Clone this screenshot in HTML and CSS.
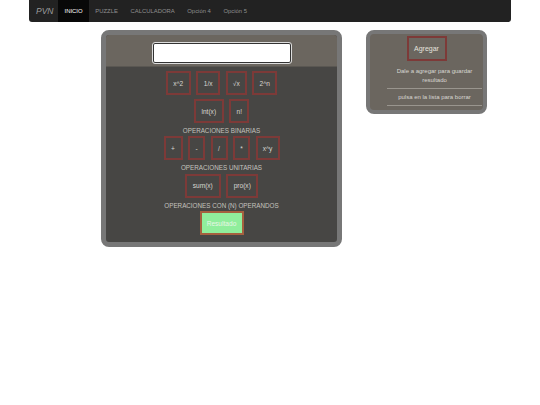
FILE: index.html
```html
<!DOCTYPE html>
<html lang="en">
<head>
  <meta charset="UTF-8">
  <title>PVN</title>
  <link rel="stylesheet" href="styles.css">
</head>
<body>

<nav class="navbar">
  <a class="brand">PVN</a>
  <a class="nav-item active">INICIO</a>
  <a class="nav-item">PUZZLE</a>
  <a class="nav-item">CALCULADORA</a>
  <a class="nav-item">Opción 4</a>
  <a class="nav-item">Opción 5</a>
</nav>

<div class="content">
  <div class="calculator">
    <div class="screen">
      <input type="text" class="display">
    </div>
    <div class="keys">
      <div class="row">
        <button class="key w25">x^2</button>
        <button class="key w24">1/x</button>
        <button class="key w21">√x</button>
        <button class="key w25">2^n</button>
      </div>
      <div class="row">
        <button class="key w30">lnt(x)</button>
        <button class="key w20">n!</button>
      </div>
      <div class="label">OPERACIONES BINARIAS</div>
      <div class="row">
        <button class="key w19">+</button>
        <button class="key w17">-</button>
        <button class="key w17">/</button>
        <button class="key w17">*</button>
        <button class="key w24">x^y</button>
      </div>
      <div class="label">OPERACIONES UNITARIAS</div>
      <div class="row">
        <button class="key w36">sum(x)</button>
        <button class="key w32">pro(x)</button>
      </div>
      <div class="label">OPERACIONES CON (N) OPERANDOS</div>
      <div class="row">
        <button class="key result">Resultado</button>
      </div>
    </div>
  </div>

  <div class="side">
    <button class="key add">Agregar</button>
    <p class="hint">Dale a agregar para guardar resultado</p>
    <p class="hint ruled">pulsa en la lista para borrar</p>
  </div>
</div>

</body>
</html>
```

FILE: styles.css
```css
* {
  box-sizing: border-box;
}

body {
  margin: 0;
  background: white;
  font-family: "Liberation Sans", Arial, sans-serif;
  color: #d8d6d2;
}

.navbar {
  display: flex;
  align-items: stretch;
  width: 482px;
  height: 22px;
  margin-left: 29px;
  padding-left: 7px;
  background: #222;
  border-radius: 0 0 3px 3px;
}

.brand {
  display: flex;
  align-items: center;
  width: 22px;
  font-size: 8.5px;
  font-style: italic;
  color: #9d9d9d;
}

.nav-item {
  display: flex;
  align-items: center;
  padding: 0 6.3px;
  font-size: 5.9px;
  color: #8f8f8f;
}

.nav-item.active {
  justify-content: center;
  width: 31px;
  padding: 0;
  background: #080808;
  color: white;
}

.content {
  display: flex;
  align-items: flex-start;
  margin: 8px 0 0 101px;
  gap: 24px;
}

.calculator {
  width: 241px;
  height: 217px;
  border: 5px solid #777;
  border-radius: 8px;
  overflow: hidden;
  background: #474644;
}

.screen {
  display: flex;
  justify-content: center;
  align-items: center;
  height: 32px;
  padding-top: 4px;
  background: #6b665f;
  border-bottom: 1px solid #5a5752;
}

.display {
  width: 138px;
  height: 20px;
  background: white;
  border: 1px solid #333;
  outline: 1px solid #ddd;
  border-radius: 2px;
}

.keys {
  padding-top: 4px;
}

.row {
  display: flex;
  justify-content: center;
  gap: 5.5px;
  margin-bottom: 4px;
}

.key {
  height: 24px;
  padding: 0;
  background: transparent;
  border: 2px solid #7d3a38;
  font-family: inherit;
  font-size: 6.6px;
  color: #d8d6d2;
}

.w17 { width: 17px; }
.w19 { width: 19px; }
.w20 { width: 20px; }
.w21 { width: 21px; }
.w24 { width: 24px; }
.w25 { width: 25px; }
.w30 { width: 30px; }
.w32 { width: 32px; }
.w36 { width: 36px; }

.label {
  height: 9.4px;
  text-align: center;
  font-size: 6.3px;
  line-height: 7px;
  color: #c4c2be;
}

.key.result {
  width: 44px;
  background: #90ee9c;
  border-color: #a5603f;
  color: #e8f6e6;
}

.side {
  display: flex;
  flex-direction: column;
  align-items: center;
  width: 121px;
  height: 84px;
  padding-top: 2px;
  background: #6b665f;
  border: 4px solid #777;
  border-radius: 8px;
}

.key.add {
  flex: none;
  width: 40px;
  height: 25px;
  font-size: 7px;
  color: #e4e2de;
}

.hint {
  align-self: flex-end;
  width: 95px;
  margin: 6px 1px 0 0;
  text-align: center;
  font-size: 6px;
  line-height: 8.5px;
}

.hint.ruled {
  margin-top: 4px;
  padding: 3.5px 0;
  border-top: 1px solid #99958e;
  border-bottom: 1px solid #99958e;
}
```
